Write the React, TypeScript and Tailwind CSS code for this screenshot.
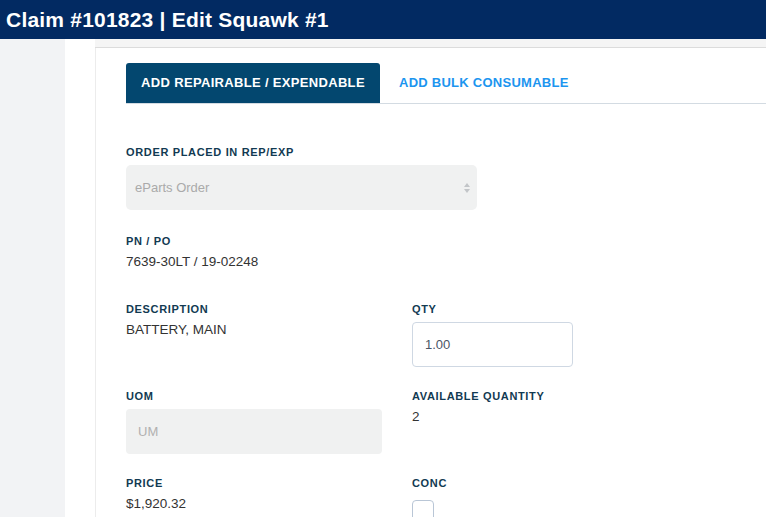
export default function App() {
  const label = "text-[11px] font-bold tracking-[0.06em] text-[#123a52] uppercase leading-[14px]";
  const value = "text-[13.5px] text-[#333] leading-[16px]";

  return (
    <div className="w-[766px] h-[517px] overflow-hidden bg-white font-['Liberation_Sans',Arial,sans-serif] flex flex-col">
      {/* title bar */}
      <div className="h-[39px] shrink-0 bg-[#022a62] flex items-center pl-[6px]">
        <h1 className="text-white font-bold text-[21px] leading-none tracking-[0.01em]">Claim #101823 | Edit Squawk #1</h1>
      </div>

      <div className="flex flex-1 min-h-0">
        {/* side nav */}
        <div className="w-[65px] shrink-0 bg-[#f2f3f5]" />
        <div className="w-[30px] shrink-0 bg-white" />

        {/* main panel */}
        <div className="flex-1 flex flex-col min-w-0">
          <div className="h-[9px] shrink-0 bg-[#f5f5f5] border-b border-[#dcdcdc]" />
          <div className="flex-1 border-l border-[#ececec] pl-[30px] pt-[16px]">
            {/* tabs */}
            <div className="flex items-end border-b border-[#d3dbe2] h-[40px]">
              <button className="h-[40px] w-[254px] bg-[#03476f] rounded-t-[3px] text-white text-[13px] font-bold tracking-[0.025em]">
                ADD REPAIRABLE / EXPENDABLE
              </button>
              <button className="h-[40px] pl-[19px] text-[#1c95ef] text-[13px] font-bold tracking-[0.02em]">
                ADD BULK CONSUMABLE
              </button>
            </div>

            <div className="pt-[41px] w-[447px]">
              <div className={label}>Order placed in Rep/Exp</div>
              <div className="mt-[6px] w-[351px] h-[45px] rounded-[5px] bg-[#f0f1f1] flex items-center justify-between pl-[9px] pr-[6px]">
                <span className="text-[13px] text-[#aaaaaa]">eParts Order</span>
                <svg width="8" height="12" viewBox="0 0 8 12">
                  <path d="M4 1 L7 5 H1 Z" fill="#c2c5c8" />
                  <path d="M4 11 L7 7 H1 Z" fill="#c2c5c8" />
                </svg>
              </div>

              <div className="mt-[24px]">
                <div className={label}>PN / PO</div>
                <div className={`${value} mt-[6px]`}>7639-30LT / 19-02248</div>
              </div>

              <div className="grid grid-cols-[256px_161px] gap-x-[30px] mt-[32px]">
                <div>
                  <div className={label}>Description</div>
                  <div className={`${value} mt-[6px]`}>BATTERY, MAIN</div>
                </div>
                <div>
                  <div className={label}>Qty</div>
                  <div className="mt-[6px] h-[45px] rounded-[4px] border border-[#cfd8e3] flex items-center pl-[12px]">
                    <span className="text-[13px] text-[#4a5566]">1.00</span>
                  </div>
                </div>

                <div className="mt-[22px]">
                  <div className={label}>UOM</div>
                  <div className="mt-[6px] h-[45px] rounded-[4px] bg-[#f0f1f1] flex items-center pl-[12px]">
                    <span className="text-[13px] text-[#b0b0b0]">UM</span>
                  </div>
                </div>
                <div className="mt-[22px]">
                  <div className={label}>Available Quantity</div>
                  <div className={`${value} mt-[6px]`}>2</div>
                </div>

                <div className="mt-[22px]">
                  <div className={label}>Price</div>
                  <div className={`${value} mt-[6px]`}>$1,920.32</div>
                </div>
                <div className="mt-[22px]">
                  <div className={label}>Conc</div>
                  <div className="mt-[10px] w-[22px] h-[22px] rounded-[4px] border border-[#b9c6d6] bg-white" />
                </div>
              </div>
            </div>
          </div>
        </div>
      </div>
    </div>
  );
}
